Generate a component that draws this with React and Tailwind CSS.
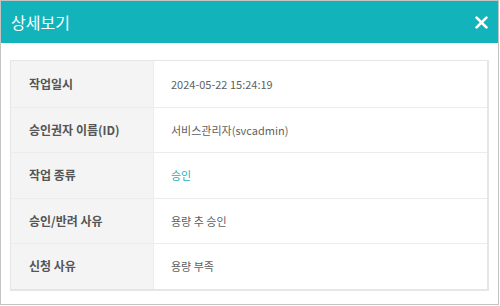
import React from "react";

const rows = [
  { label: "작업일시", value: "2024-05-22 15:24:19" },
  { label: "승인권자 이름(ID)", value: "서비스관리자(svcadmin)" },
  { label: "작업 종류", value: "승인", accent: true },
  { label: "승인/반려 사유", value: "용량 추 승인" },
  { label: "신청 사유", value: "용량 부족" },
];

export default function App() {
  return (
    <div
      className="w-[499px] h-[305px] border border-[#c4c4c4] bg-white flex flex-col"
      style={{ fontFamily: '"Noto Sans CJK KR", "Noto Sans", sans-serif' }}
    >
      {/* Header */}
      <div className="h-[42px] bg-[#13b3bb] flex items-center justify-between pl-[10px] pr-[10px] shrink-0">
        <h1 className="text-white text-[16px] leading-none">상세보기</h1>
        <button className="text-white">
          <svg width="13" height="13" viewBox="0 0 13 13">
            <path d="M1.6 1.6L11.4 11.4M11.4 1.6L1.6 11.4" stroke="white" strokeWidth="2.7" strokeLinecap="round" />
          </svg>
        </button>
      </div>

      {/* Body */}
      <div className="px-[9px] pt-[17px]">
        <div className="border border-[#e6e6e6] border-r-2 border-b-2">
          {rows.map((row, idx) => (
            <div
              key={row.label}
              className={`flex h-[45.5px] ${idx > 0 ? "border-t border-[#ececec]" : ""}`}
            >
              <div className="w-[143px] shrink-0 bg-[#f4f4f4] border-r border-[#ececec] flex items-center pl-[18px] text-[12px] font-bold text-[#555]">
                {row.label}
              </div>
              <div
                className={`flex items-center pl-[17px] text-[11px] ${
                  row.accent ? "text-[#27b1b8]" : "text-[#5f5f5f]"
                }`}
              >
                {row.value}
              </div>
            </div>
          ))}
        </div>
      </div>
    </div>
  );
}
